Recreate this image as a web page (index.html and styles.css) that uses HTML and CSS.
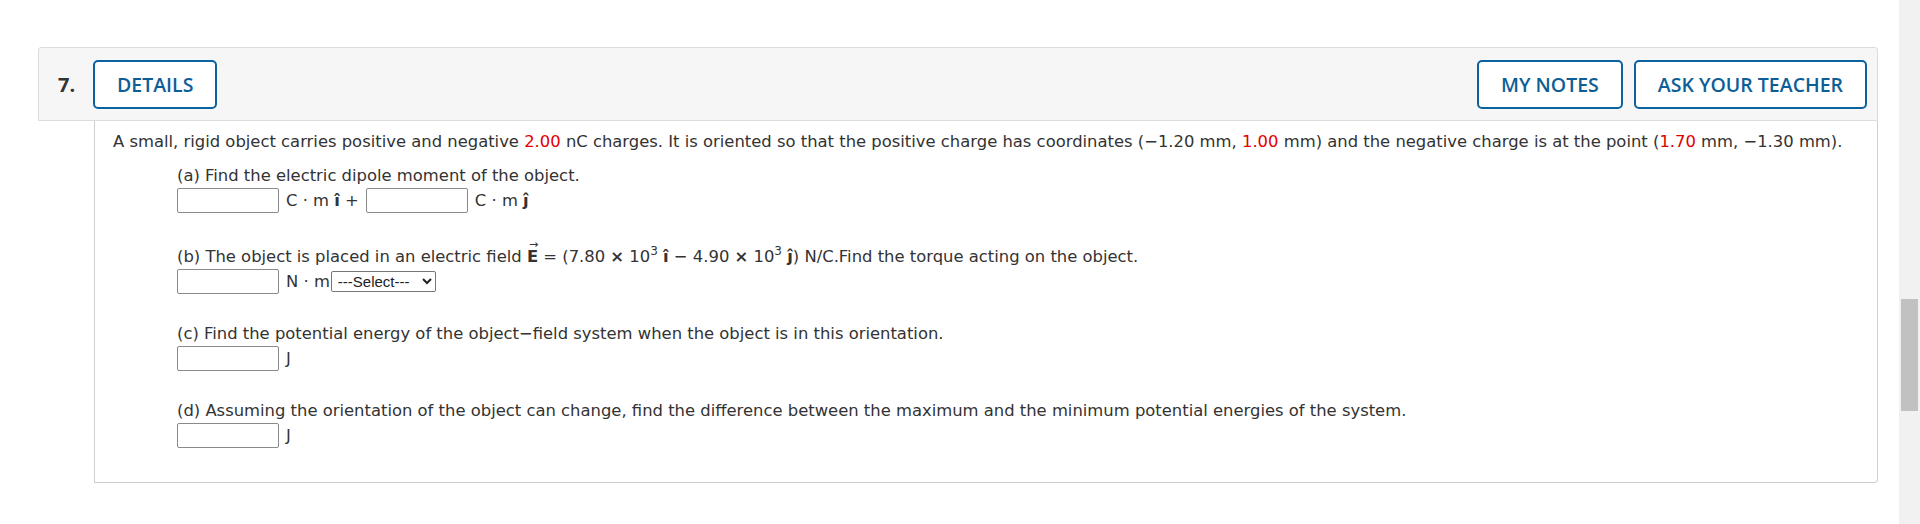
FILE: index.html
```html
<!DOCTYPE html>
<html lang="en">
<head>
<meta charset="utf-8">
<title>Question 7</title>
<link rel="stylesheet" href="styles.css">
</head>
<body>
<div class="page">
  <main class="main">
    <section class="question">
      <header class="q-head">
        <span class="q-num">7.</span>
        <button class="btn">DETAILS</button>
        <span class="spacer"></span>
        <div class="actions">
          <button class="btn">MY NOTES</button>
          <button class="btn">ASK YOUR TEACHER</button>
        </div>
      </header>
      <div class="q-body">
        <p class="intro">A small, rigid object carries positive and negative <span class="red">2.00</span> nC charges. It is oriented so that the positive charge has coordinates (−1.20 mm, <span class="red">1.00</span> mm) and the negative charge is at the point (<span class="red">1.70</span> mm, −1.30 mm).</p>
        <div class="parts">
          <div class="part">
            <div class="label">(a) Find the electric dipole moment of the object.</div>
            <div class="answer tall"><input class="ans" type="text"><span class="unit">C · m <b>î</b> +</span><input class="ans" type="text"><span class="unit">C · m <b>ĵ</b></span></div>
          </div>
          <div class="part">
            <div class="label">(b) The object is placed in an electric field <span class="vec"><b>E</b><span class="arrow">→</span></span> = (7.80 <b>×</b> 10<sup>3</sup> <b>î</b> − 4.90 <b>×</b> 10<sup>3</sup> <b>ĵ</b>) N/C.Find the torque acting on the object.</div>
            <div class="answer"><input class="ans" type="text"><span class="unit unit-tight">N · m</span><select class="sel"><option>---Select---</option></select></div>
          </div>
          <div class="part">
            <div class="label">(c) Find the potential energy of the object−field system when the object is in this orientation.</div>
            <div class="answer"><input class="ans" type="text"><span class="unit">J</span></div>
          </div>
          <div class="part">
            <div class="label">(d) Assuming the orientation of the object can change, find the difference between the maximum and the minimum potential energies of the system.</div>
            <div class="answer"><input class="ans" type="text"><span class="unit">J</span></div>
          </div>
        </div>
      </div>
    </section>
  </main>
  <div class="scrollbar"><div class="thumb"></div></div>
</div>
</body>
</html>
```

FILE: styles.css
```css
* { box-sizing: border-box; }
html, body { margin: 0; padding: 0; background: #fff; }
body { font-family: "DejaVu Sans", Verdana, sans-serif; color: #333; }

.page { display: flex; height: 524px; overflow: hidden; }
.main { flex: 1; padding: 47px 21px 0 38px; }

.scrollbar { width: 21px; background: #f1f1f1; display: flex; flex-direction: column; padding: 299px 2px 0 2px; }
.thumb { height: 112px; background: #c1c1c1; }

.question { display: flex; flex-direction: column; }

.q-head {
  display: flex; align-items: center;
  height: 74px;
  padding: 0 10px 0 19px;
  background: #f6f6f6;
  border: 1px solid #dcdcdc;
  border-radius: 3px 3px 0 0;
}
.q-num { font-family: "Open Sans", sans-serif; font-weight: 700; font-size: 20px; color: #333; width: 35px; }
.spacer { flex: 1; }
.actions { display: flex; gap: 11px; }
.btn {
  font-family: "Open Sans", sans-serif; font-weight: 600; font-size: 19.5px;
  color: #0d5e96; background: #fff;
  border: 2px solid #0a63a0; border-radius: 5px;
  height: 49px; padding: 0 22px;
  letter-spacing: 0;
}

.q-body {
  margin-left: 56px;
  border: 1px solid #cfcfcf; border-top: none;
  border-radius: 0 0 4px 0;
  padding: 10px 18px 34px 18px;
  font-size: 16.4px;
}
.intro { margin: 0; line-height: 22px; }
.red { color: #e00000; }
.parts { padding-left: 64px; display: flex; flex-direction: column; gap: 28px; margin-top: 11px; }
.label { line-height: 23px; }
.answer { display: flex; align-items: center; height: 26px; }
.answer.tall { height: 30px; align-items: flex-start; padding-top: 1px; }
.ans { width: 102px; height: 25px; border: 1px solid #8a8a8a; border-radius: 2px; background: #fff; margin: 0; flex: none; }
.unit { padding: 0 7px; line-height: 25px; }
.unit-tight { padding-right: 1px; }
.unit b { font-weight: 700; }
.vec { position: relative; display: inline-block; }
.arrow { position: absolute; left: 2px; top: -12px; font-size: 11px; font-weight: 400; }
sup { font-size: 12px; vertical-align: 7px; line-height: 0; }
.sel {
  font-family: "Liberation Sans", Arial, sans-serif; font-size: 15px; color: #222;
  height: 21px; width: 105px; margin: 0; padding: 0 0 0 2px;
  border: 1px solid #767676; border-radius: 2px; background: #fff;
}
```
